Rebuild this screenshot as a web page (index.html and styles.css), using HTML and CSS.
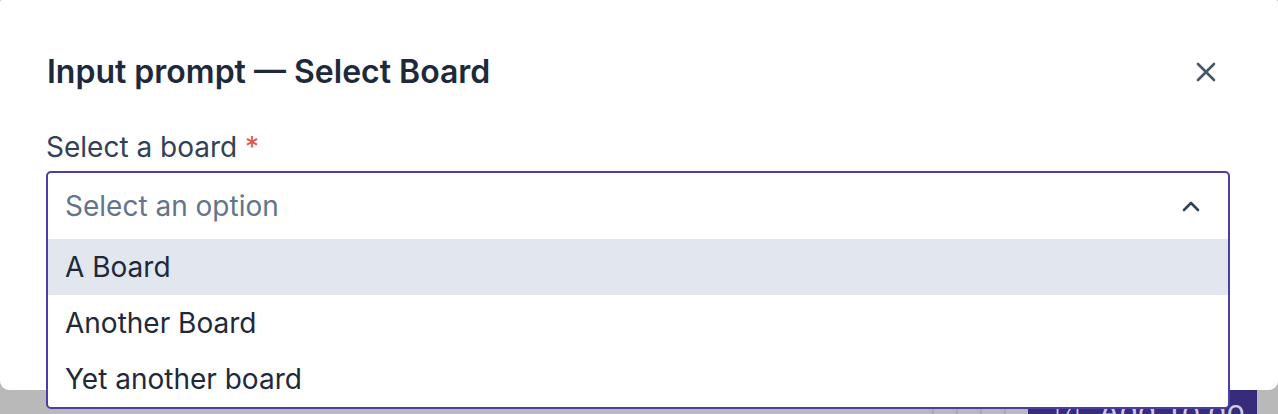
FILE: index.html
```html
<!DOCTYPE html>
<html lang="en">
<head>
<meta charset="utf-8">
<title>Input prompt — Select Board</title>
<link rel="stylesheet" href="styles.css">
</head>
<body>
<div class="modal">
  <div class="modal-header">
    <h2 class="modal-title">Input prompt — Select Board</h2>
    <button class="close-btn" aria-label="Close">
      <svg width="22" height="22" viewBox="0 0 22 22"><path d="M3 3 L19 19 M19 3 L3 19" stroke="#475569" stroke-width="2.6" stroke-linecap="round" fill="none"/></svg>
    </button>
  </div>
  <label class="field-label">Select a board <span class="req">*</span></label>
  <div class="select">
    <div class="select-trigger">
      <span class="placeholder">Select an option</span>
      <svg class="chevron" width="18" height="12" viewBox="0 0 18 12"><path d="M2 10 L9 3 L16 10" stroke="#334155" stroke-width="2.6" stroke-linecap="round" stroke-linejoin="round" fill="none"/></svg>
    </div>
    <ul class="options">
      <li class="option active">A Board</li>
      <li class="option">Another Board</li>
      <li class="option">Yet another board</li>
    </ul>
  </div>
</div>
<div class="page-bar">
  <span class="divider"></span>
  <span class="divider"></span>
  <span class="divider"></span>
  <span class="divider"></span>
  <div class="primary-btn">
    <span class="btn-icon">☑</span>
    <span class="btn-text">Add To do</span>
  </div>
</div>
</body>
</html>
```

FILE: styles.css
```css
* { box-sizing: border-box; }
html, body { margin: 0; padding: 0; }
body {
  width: 1278px;
  height: 414px;
  overflow: hidden;
  background: #b9b9b9;
  font-family: Inter, "Noto Sans", sans-serif;
}
.modal {
  position: relative;
  z-index: 2;
  height: 390px;
  background: #ffffff;
  border-radius: 2px 2px 9px 9px;
  padding: 52px 48px 0 46px;
  display: flex;
  flex-direction: column;
}
.modal-header {
  display: flex;
  align-items: center;
  justify-content: space-between;
  height: 40px;
}
.modal-title {
  margin: 0 0 0 1px;
  font-size: 32px;
  line-height: 40px;
  font-weight: 600;
  color: #1e293b;
}
.close-btn {
  border: 0;
  background: none;
  padding: 0;
  margin-right: 13px;
  width: 22px;
  height: 22px;
  display: flex;
}
.field-label {
  margin-top: 37px;
  font-size: 28px;
  line-height: 36px;
  color: #334155;
}
.req { color: #e0544d; }
.select {
  margin-top: 6px;
  border: 2px solid #4a3fa6;
  border-radius: 5px;
  background: #fff;
  flex: none;
}
.select-trigger {
  height: 66px;
  display: flex;
  align-items: center;
  justify-content: space-between;
  padding: 0 28px 0 17px;
}
.placeholder {
  font-size: 28px;
  line-height: 36px;
  color: #64748b;
}
.options {
  list-style: none;
  margin: 0;
  padding: 0;
}
.option {
  height: 56px;
  padding: 10px 17px;
  font-size: 28px;
  line-height: 36px;
  color: #1e293b;
}
.option.active { background: #e2e7ef; }
.page-bar {
  height: 24px;
  display: flex;
  align-items: flex-start;
  justify-content: flex-end;
  padding-right: 21px;
}
.divider {
  width: 2px;
  height: 24px;
  background: #a9a9ad;
  margin-right: 22px;
}
.primary-btn {
  width: 229px;
  height: 56px;
  background: #372c7b;
  display: flex;
  align-items: flex-start;
  gap: 18px;
  padding: 3px 0 0 26px;
  color: #cfcbe2;
  font-size: 30px;
  line-height: 36px;
}
.btn-icon { font-size: 30px; }
```
